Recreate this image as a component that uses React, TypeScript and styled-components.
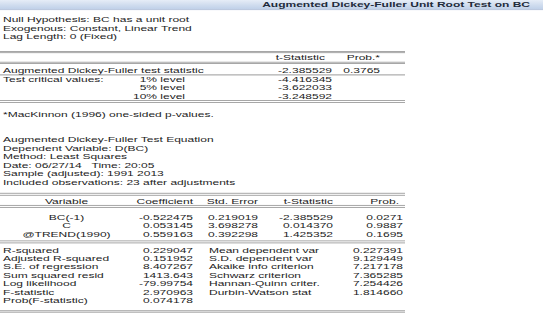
import React from 'react';
import styled, { createGlobalStyle } from 'styled-components';

// the capture is squashed vertically, so lay out at natural size and squeeze once
const SQUASH = 0.672;

const GlobalStyle = createGlobalStyle`
  html, body {
    margin: 0;
    padding: 0;
    background: #ffffff;
    overflow: hidden;
  }
  body {
    font-family: "Liberation Sans", Arial, sans-serif;
    color: #1c1c1c;
  }
`;

const Viewport = styled.div`
  width: 543px;
  height: 316px;
  overflow: hidden;
`;

const Page = styled.div`
  width: 543px;
  transform: scaleY(${SQUASH});
  transform-origin: 0 0;
  font-size: 12px;
  line-height: 12.5px;
`;

const TitleBar = styled.div`
  height: 14px;
  display: flex;
  align-items: center;
  justify-content: flex-end;
  padding-right: 13px;
  background: linear-gradient(to bottom, #e6edf7 0%, #cfdcee 55%, #bfd0e8 100%);
  border-bottom: 1.5px solid #9fb3d0;
  font-weight: bold;
  color: #1f2b3b;
  line-height: 14px;
`;

const TextBlock = styled.div<{ $top: number }>`
  margin-top: ${({ $top }) => $top}px;
  padding-left: 3px;
  white-space: pre;
`;

const Table = styled.div<{ $cols: string; $top: number }>`
  width: 405px;
  margin-top: ${({ $top }) => $top}px;
  display: grid;
  grid-template-columns: ${({ $cols }) => $cols};
`;

const Cell = styled.div<{
  $col: number;
  $span?: number;
  $align?: 'left' | 'right' | 'center';
  $pr?: number;
  $pl?: number;
}>`
  grid-column: ${({ $col, $span = 1 }) => `${$col} / span ${$span}`};
  text-align: ${({ $align = 'right' }) => $align};
  padding-right: ${({ $pr = 0 }) => $pr}px;
  padding-left: ${({ $pl = 0 }) => $pl}px;
  white-space: pre;
`;

const DoubleRule = styled.div`
  grid-column: 1 / -1;
  height: 1.5px;
  border-top: 1.5px solid #7c7c7c;
  border-bottom: 1.5px solid #7c7c7c;
`;

const SingleRule = styled.div`
  grid-column: 1 / -1;
  border-top: 1.5px solid #6a6a6a;
`;

const Gap = styled.div<{ $h: number }>`
  grid-column: 1 / -1;
  height: ${({ $h }) => $h}px;
`;

const critical = [
  { level: '1% level', value: '-4.416345' },
  { level: '5% level', value: '-3.622033' },
  { level: '10% level', value: '-3.248592' },
];

const coefficients = [
  ['BC(-1)', '-0.522475', '0.219019', '-2.385529', '0.0271'],
  ['C', '0.053145', '3.698278', '0.014370', '0.9887'],
  ['@TREND(1990)', '0.559163', '0.392298', '1.425352', '0.1695'],
];

const stats = [
  ['R-squared', '0.229047', 'Mean dependent var', '0.227391'],
  ['Adjusted R-squared', '0.151952', 'S.D. dependent var', '9.129449'],
  ['S.E. of regression', '8.407267', 'Akaike info criterion', '7.217178'],
  ['Sum squared resid', '1413.643', 'Schwarz criterion', '7.365285'],
  ['Log likelihood', '-79.99754', 'Hannan-Quinn criter.', '7.254426'],
  ['F-statistic', '2.970963', 'Durbin-Watson stat', '1.814660'],
  ['Prob(F-statistic)', '0.074178', '', ''],
];

const App: React.FC = () => {
  return (
    <Viewport>
      <GlobalStyle />
      <Page>
        <TitleBar>Augmented Dickey-Fuller Unit Root Test on BC</TitleBar>

        <TextBlock $top={8}>
          <div>Null Hypothesis: BC has a unit root</div>
          <div>Exogenous: Constant, Linear Trend</div>
          <div>Lag Length: 0 (Fixed)</div>
        </TextBlock>

        <Table $cols="100px 88px 147px 48px 22px" $top={15}>
          <DoubleRule />
          <Cell $col={3} $pr={10}>t-Statistic</Cell>
          <Cell $col={4} $pr={3}>Prob.*</Cell>
          <DoubleRule />
          <Gap $h={3} />
          <Cell $col={1} $span={2} $align="left" $pl={3}>Augmented Dickey-Fuller test statistic</Cell>
          <Cell $col={3} $pr={3}>-2.385529</Cell>
          <Cell $col={4} $pr={3}>0.3765</Cell>
          <SingleRule />
          {critical.map((c, i) => (
            <React.Fragment key={c.level}>
              {i === 0 && <Cell $col={1} $align="left" $pl={3}>Test critical values:</Cell>}
              <Cell $col={2} $pr={3}>{c.level}</Cell>
              <Cell $col={3} $pr={3}>{c.value}</Cell>
            </React.Fragment>
          ))}
          <DoubleRule />
        </Table>

        <TextBlock $top={11}>*MacKinnon (1996) one-sided p-values.</TextBlock>

        <TextBlock $top={26}>
          <div>Augmented Dickey-Fuller Test Equation</div>
          <div>Dependent Variable: D(BC)</div>
          <div>Method: Least Squares</div>
          <div>Date: 06/27/14   Time: 20:05</div>
          <div>Sample (adjusted): 1991 2013</div>
          <div>Included observations: 23 after adjustments</div>
        </TextBlock>

        <Table $cols="133px 66px 65px 75px 66px" $top={10}>
          <DoubleRule />
          <Gap $h={2} />
          <Cell $col={1} $align="center">Variable</Cell>
          <Cell $col={2} $pr={6}>Coefficient</Cell>
          <Cell $col={3} $pr={6}>Std. Error</Cell>
          <Cell $col={4} $pr={6}>t-Statistic</Cell>
          <Cell $col={5} $pr={6}>Prob.</Cell>
          <DoubleRule />
          <Gap $h={9} />
          {coefficients.map(row => (
            <React.Fragment key={row[0]}>
              <Cell $col={1} $align="center">{row[0]}</Cell>
              <Cell $col={2} $pr={6}>{row[1]}</Cell>
              <Cell $col={3} $pr={6}>{row[2]}</Cell>
              <Cell $col={4} $pr={6}>{row[3]}</Cell>
              <Cell $col={5} $pr={2}>{row[4]}</Cell>
            </React.Fragment>
          ))}
          <Gap $h={3} />
          <DoubleRule />
          <Gap $h={4.5} />
          {stats.map(row => (
            <React.Fragment key={row[0]}>
              <Cell $col={1} $align="left" $pl={3}>{row[0]}</Cell>
              <Cell $col={2} $pr={6}>{row[1]}</Cell>
              <Cell $col={3} $span={2} $align="left" $pl={10}>{row[2]}</Cell>
              <Cell $col={5} $pr={2}>{row[3]}</Cell>
            </React.Fragment>
          ))}
          <Gap $h={8} />
          <DoubleRule />
        </Table>
      </Page>
    </Viewport>
  );
};

export default App;
